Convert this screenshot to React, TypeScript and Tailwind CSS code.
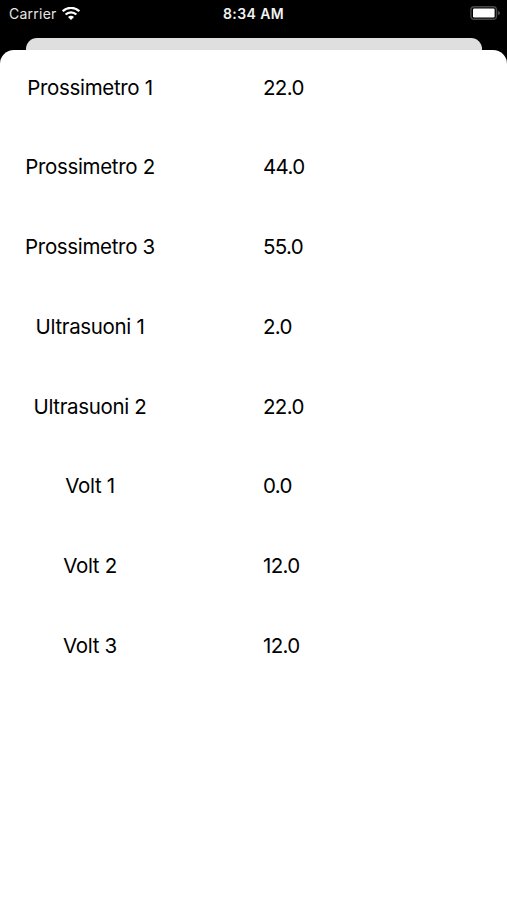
interface Reading {
  label: string;
  value: string;
}

const READINGS: Reading[] = [
  { label: "Prossimetro 1", value: "22.0" },
  { label: "Prossimetro 2", value: "44.0" },
  { label: "Prossimetro 3", value: "55.0" },
  { label: "Ultrasuoni 1", value: "2.0" },
  { label: "Ultrasuoni 2", value: "22.0" },
  { label: "Volt 1", value: "0.0" },
  { label: "Volt 2", value: "12.0" },
  { label: "Volt 3", value: "12.0" },
];

function WifiIcon() {
  return (
    <svg aria-hidden="true" viewBox="0 0 18 14" className="h-3.5 w-[18px]" fill="none">
      <path d="M0.7 4.2C5.3 -0.2 12.7 -0.2 17.3 4.2" stroke="white" strokeWidth="2.3" />
      <path d="M3.6 7.5C6.6 4.6 11.4 4.6 14.4 7.5" stroke="white" strokeWidth="2.3" />
      <path d="M6 9.9C7.7 8.3 10.3 8.3 12 9.9L9 13Z" fill="white" />
    </svg>
  );
}

function BatteryIcon() {
  return (
    <svg aria-hidden="true" viewBox="0 0 31 14" className="h-3.5 w-[31px]" fill="none">
      <rect x="0.9" y="0.7" width="25.6" height="12.6" rx="3.4" stroke="#484848" strokeWidth="1.4" />
      <rect x="3" y="2.4" width="21.6" height="9" rx="1.2" fill="white" />
      <path d="M27.8 4.7C30.9 5.7 30.9 8.3 27.8 9.3Z" fill="#484848" />
    </svg>
  );
}

function StatusBar() {
  return (
    <header className="grid h-[27px] grid-cols-3 items-center pr-1.5 pl-[9px] text-sm text-white">
      <div className="flex items-center gap-[5px]">
        <span className="tracking-[0.25px] text-[#e6e6e6]">Carrier</span>
        <WifiIcon />
      </div>
      <span className="-ml-[3px] text-center font-semibold tracking-[0.4px] text-[#f2f2f2]">8:34 AM</span>
      <div className="-mt-px flex justify-end">
        <BatteryIcon />
      </div>
    </header>
  );
}

export default function App() {
  return (
    <div className="flex h-[900px] w-[507px] flex-col overflow-hidden bg-black font-[Inter,sans-serif]">
      <StatusBar />
      <div className="mx-[25.5px] mt-[10.5px] h-3 rounded-t-[11px] bg-[#dfdfdf]" />
      <main className="flex-1 rounded-t-[14px] bg-white text-[20.5px] leading-7 text-black">
        {READINGS.map(({ label, value }) => (
          <div key={label} className="flex h-[79.8px] items-start pt-6">
            <span className="w-[181px] pr-px text-center tracking-[-0.33px]">{label}</span>
            <span className="ml-[82px] tracking-[-0.65px]">{value}</span>
          </div>
        ))}
      </main>
    </div>
  );
}
